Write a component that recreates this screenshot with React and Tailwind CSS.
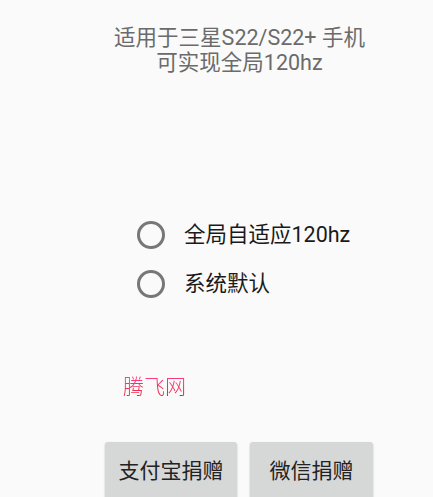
import React from 'react';

const font = { fontFamily: 'Roboto, "Noto Sans CJK SC", sans-serif' };

const Radio = ({ label }) => (
  <div className="flex items-center h-[49px] pl-[137px]">
    <span className="w-[28px] h-[28px] rounded-full border-[3px] border-[#777777] box-border" />
    <span className="ml-[19px] text-[21.5px] text-[#1a1a1a] leading-none">{label}</span>
  </div>
);

const DonateButton = ({ label, width }) => (
  <button
    className={`h-[62px] ${width} rounded-[3px] bg-[#d6d7d7] shadow-[0_1px_2px_rgba(0,0,0,0.25)] text-[21px] text-[#222222] flex items-start justify-center pt-[14px]`}
  >
    {label}
  </button>
);

const App = () => {
  return (
    <div className="w-[433px] h-[497px] bg-[#fafafa] overflow-hidden flex flex-col" style={font}>
      <div className="pt-[25px] pl-[46px] text-center text-[21.5px] leading-[25px] text-[#6b6b6b]">
        <div>适用于三星S22/S22+ 手机</div>
        <div>可实现全局120hz</div>
      </div>

      <div className="mt-[135px] flex flex-col">
        <Radio label="全局自适应120hz" />
        <Radio label="系统默认" />
      </div>

      <div className="mt-[67px] pl-[123px] h-[30px] flex items-center">
        <span
          className="text-[21px] leading-none bg-gradient-to-b from-[#ff3f8a] to-[#e8203a] bg-clip-text text-transparent"
          style={{ fontFamily: '"Noto Sans CJK SC", sans-serif', fontWeight: 300 }}
        >
          腾飞网
        </span>
      </div>

      <div className="mt-[46px] pl-[105px] flex gap-[13px]">
        <DonateButton label="支付宝捐赠" width="w-[132px]" />
        <DonateButton label="微信捐赠" width="w-[123px]" />
      </div>
    </div>
  );
};

export default App;
